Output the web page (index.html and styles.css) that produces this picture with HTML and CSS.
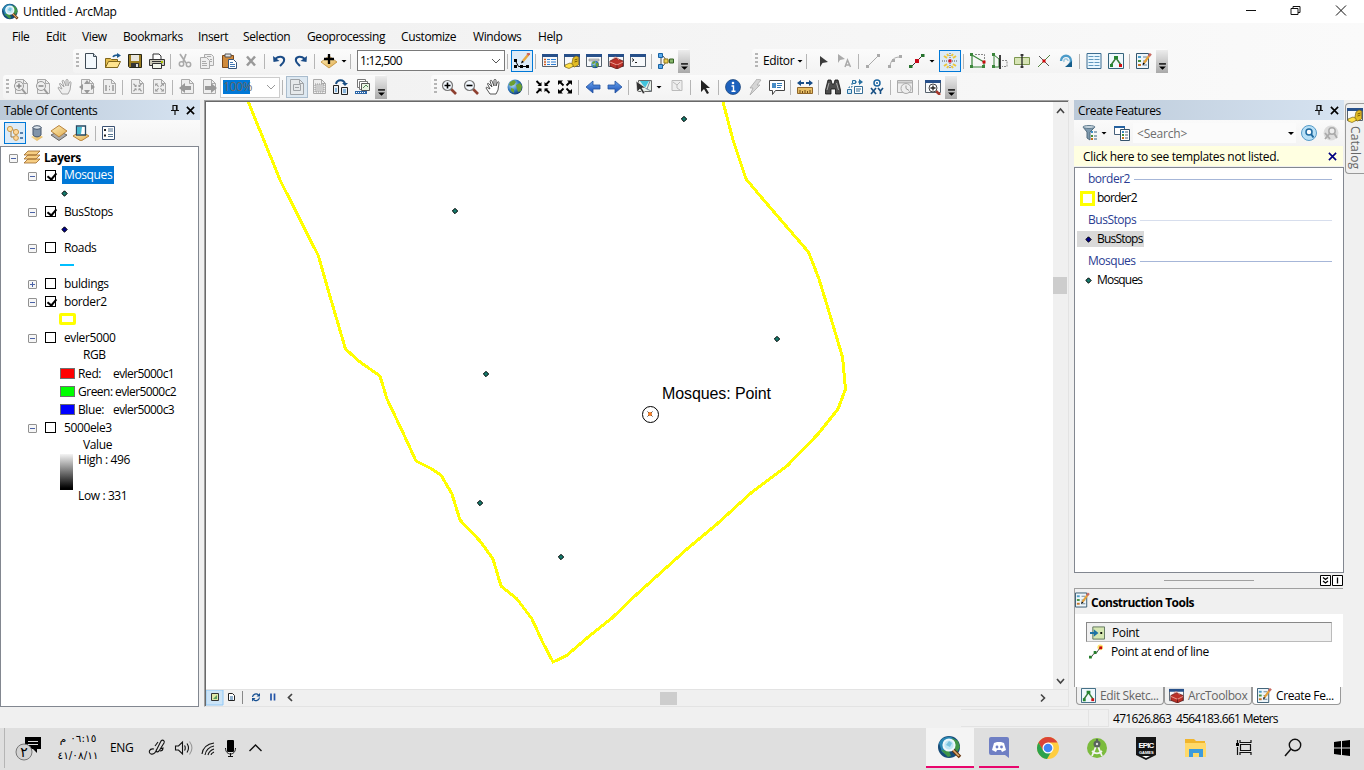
FILE: index.html
```html
<!DOCTYPE html>
<html lang="en">
<head>
<meta charset="utf-8">
<title>Untitled - ArcMap</title>
<link rel="stylesheet" href="styles.css">
</head>
<body>
<svg class="defs">
<defs>
<linearGradient id="gold" x1="0" y1="0" x2="1" y2="1"><stop offset="0" stop-color="#ffeeb8"/><stop offset="1" stop-color="#e0ad50"/></linearGradient>
<linearGradient id="blue" x1="0" y1="0" x2="0" y2="1"><stop offset="0" stop-color="#6aa5ee"/><stop offset="1" stop-color="#1a4eb4"/></linearGradient>
<radialGradient id="sea" cx=".35" cy=".35" r=".7"><stop offset="0" stop-color="#bfe0f7"/><stop offset=".6" stop-color="#2f78bd"/><stop offset="1" stop-color="#123a70"/></radialGradient>
<symbol id="globe" viewBox="0 0 16 16"><circle cx="8" cy="8" r="7.5" fill="url(#sea)"/><path d="M3 3l4-2 2 2-2 3-3 1-2-1zM9 6l4-2 2 3-1 5-3 1-1-3zM4 9l3 1v4l-3-2z" fill="#6c9f31"/></symbol>
<symbol id="app" viewBox="0 0 24 24"><circle cx="11" cy="12" r="11" fill="#154b78"/><path d="M1 8c3-5 7-7 12-6l5 3-2 4-7 11-5-3z" fill="#2987b4"/><path d="M14 3l6 3 2 6-3 5-3-4zM3 15l8 1 2 5-3 1z" fill="#3f9547"/><path d="M15 15l7 7" stroke="#67340c" stroke-width="3.6"/><path d="M15 15l6 6" stroke="#dfab70" stroke-width="1.6"/><circle cx="11" cy="10" r="5.6" fill="#bfe6f5" stroke="#edf7fb" stroke-width="2"/><path d="M8 10l3-4 3 2-2 4z" fill="#79c2df"/></symbol>
<symbol id="new" viewBox="0 0 16 16"><path d="M2.5.5h8l3 3v12h-11z" fill="#f3f8fc" stroke="#3e4a55"/><path d="M10.500.5v3h3" fill="#cfdbe5" stroke="#3e4a55"/></symbol>
<symbol id="open" viewBox="0 0 16 16"><path d="M.5 5.500h5l1 1h6v8h-12z" fill="#e5bd4c" stroke="#81671c"/><path d="M.5 14.500l3-6h12l-3 6z" fill="#ffe48e" stroke="#81671c"/><path d="M8 4c1-2 3-2 5-2" fill="none" stroke="#1c5a91" stroke-width="1.500"/><path d="M12 0l4 2.500-4 2.500z" fill="#1c5a91"/></symbol>
<symbol id="save" viewBox="0 0 16 16"><path d="M1.500 1.500h13v13h-12l-1-1z" fill="#9a7c20" stroke="#282719"/><path d="M4 2h8v6H4z" fill="#e8e6df"/><path d="M4 10h8v4H4z" fill="#333"/><path d="M9 11h2v3H9z" fill="#ddd"/></symbol>
<symbol id="print" viewBox="0 0 16 16"><path d="M4 7V1h6l2 2v4" fill="#fff" stroke="#333"/><path d="M.5 6.500h15v6H.5z" fill="#cdcab8" stroke="#333"/><path d="M3.500 10.500h9v5h-9z" fill="#f2f5e9" stroke="#333"/><path d="M3 8.500h10" stroke="#333"/><path d="M12 9h2" stroke="#aac600" stroke-width="2"/></symbol>
<symbol id="cut" viewBox="0 0 16 16"><path d="M3 1l6 9M9 1L6 9" stroke="#aaa" stroke-width="1.700"/><circle cx="4.500" cy="11" r="2.200" fill="none" stroke="#aaa" stroke-width="1.500"/><circle cx="11.500" cy="11.500" r="2.200" fill="none" stroke="#aaa" stroke-width="1.500"/></symbol>
<symbol id="copy" viewBox="0 0 16 16"><g fill="#eee" stroke="#aaa"><path d="M5.500 1.500h7l2 2v9h-9z"/><path d="M1.500 4.500h6l3 3v8h-9z"/></g><path d="M3 8.500h4M3 10.500h5M3 12.500h5M8 3.500h4M11 6.500h2M11 8.500h2" stroke="#aaa"/></symbol>
<symbol id="paste" viewBox="0 0 16 16"><path d="M1.500 2.500h11v12h-11z" fill="#d08b3d" stroke="#7b4717"/><path d="M4 1h6v3H4z" fill="#e5e5e5" stroke="#555"/><path d="M7.500 6.500h5l3 3v6h-8z" fill="#fff" stroke="#36547a"/><path d="M9 9.500h3M9 11.500h5M9 13.500h5" stroke="#4278b5"/></symbol>
<symbol id="del" viewBox="0 0 16 16"><path d="M4 3.500l8 9M12 3.500l-8 9" stroke="#999" stroke-width="2.500"/></symbol>
<symbol id="undo" viewBox="0 0 16 16"><path d="M4 6c5-4 10-2 9 2-.5 2-2 3-4 5" fill="none" stroke="#1b4c87" stroke-width="2"/><path d="M2 3l.5 6 6-1z" fill="#1b4c87"/></symbol>
<symbol id="redo" viewBox="0 0 16 16"><path d="M12 6C7 2 2 4 3 8c.5 2 2 3 4 5" fill="none" stroke="#1b4c87" stroke-width="2"/><path d="M14 3l-.5 6-6-1z" fill="#1b4c87"/></symbol>
<symbol id="add" viewBox="0 0 16 16"><path d="M0 9l8-6 8 6-8 6z" fill="url(#gold)" stroke="#b98225" stroke-width=".7"/><path d="M8 1v10M3 6h10" stroke="#000" stroke-width="2.300"/></symbol>
<symbol id="edit" viewBox="0 0 16 16"><path d="M1.500 8l3 5.500h10V12" fill="none" stroke="#000"/><path d="M0 6h3v3H0zM0 12h3v3H0zM6 12h3v3H6zM12 12h3v3h-3z"/><path d="M9 8l5-6" stroke="#e9a83d" stroke-width="2.500"/><path d="M13.500 2l2-2" stroke="#cb6355" stroke-width="3"/><path d="M7 10.500l1-3 2 1.500z"/></symbol>
<symbol id="win" viewBox="0 0 16 16"><path d="M.5 1.500h15v12H.5z" fill="#f7f9fb" stroke="#56616c"/><path d="M0 1h16v3H0z" fill="#27508a"/></symbol>
<symbol id="toc" viewBox="0 0 16 16"><use href="#win"/><path d="M2 6.500h2m-2 2.500h2m-2 2.500h2" stroke="#d25b21" stroke-width="1.300"/><path d="M5 6.500h3m1 0h5M5 9h3m1 0h5M5 11.500h3m1 0h5" stroke="#2d7dd3"/></symbol>
<symbol id="catalog" viewBox="0 0 16 16"><use href="#win"/><path d="M9 5l3-2 2.500 1v8l-4 2-3-2z" fill="#e3bd23" stroke="#7e6210" stroke-width=".7"/><path d="M1 12l5-2 3 1.500v2L5 15.500 1 14z" fill="#ffe145" stroke="#776014" stroke-width=".7"/><path d="M10.500 7l3-1M10.500 9l3-1" stroke="#795c00"/></symbol>
<symbol id="search" viewBox="0 0 16 16"><use href="#win"/><path d="M3 6h10v2H3z" fill="#ccc" stroke="#888" stroke-width=".6"/><use href="#globe" x="5" y="7.500" width="8" height="8"/></symbol>
<symbol id="toolbox" viewBox="0 0 16 16"><use href="#win"/><path d="M2 8l6-3 7 3v5l-6 3-7-3z" fill="#bb3128" stroke="#651b18" stroke-width=".8"/><path d="M5 6c1-3 5-2 6 1M2 9l7 3 6-3" stroke="#ec9c91" fill="none"/><path d="M9 12v4" stroke="#651b18"/></symbol>
<symbol id="python" viewBox="0 0 16 16"><use href="#win"/><path d="M2 5.500l2 1.500-2 1.500M5 9.500h2" fill="none" stroke="#222"/></symbol>
<symbol id="model" viewBox="0 0 16 16"><path d="M3 3v10M5 3l4 5-4 5M9 8h4" fill="none" stroke="#555"/><path d="M.5.500h4v4h-4zM.5 11.500h4v4h-4z" fill="#59a9ec" stroke="#1762a2"/><path d="M6 6h4v4H6z" fill="#e9cf55" stroke="#93781b"/><path d="M11.500 6h4v4h-4z" fill="#86b66b" stroke="#356025"/></symbol>
<symbol id="zin" viewBox="0 0 16 16"><path d="M10 10l5 5" stroke="#8e3f2f" stroke-width="2.700"/><circle cx="6.500" cy="6.500" r="5" fill="#f4f9ff" stroke="#777" stroke-width="1.200"/><path d="M3.500 6.500h6M6.500 3.500v6" stroke="#000" stroke-width="1.600"/></symbol>
<symbol id="zout" viewBox="0 0 16 16"><path d="M10 10l5 5" stroke="#8e3f2f" stroke-width="2.700"/><circle cx="6.500" cy="6.500" r="5" fill="#f4f9ff" stroke="#777" stroke-width="1.200"/><path d="M3.500 6.500h6" stroke="#000" stroke-width="1.600"/></symbol>
<symbol id="pan" viewBox="0 0 16 16"><path d="M5 15L1 9c0-1 1-1 2 0l2 1L2.500 5c0-1 1-1 1.500 0L7 8 5 2c.5-1 1.500-1 2 0l2 5V1c.5-1 1.500-1 2 0v6l1.500-4c1-1 1.500 0 1.500 1l-1 7-2 4z" fill="#fff" stroke="#444" stroke-width=".9"/></symbol>
<symbol id="pangrey" viewBox="0 0 16 16"><path d="M5 15L1 9c0-1 1-1 2 0l2 1L2.500 5c0-1 1-1 1.500 0L7 8 5 2c.5-1 1.500-1 2 0l2 5V1c.5-1 1.500-1 2 0v6l1.500-4c1-1 1.500 0 1.500 1l-1 7-2 4z" fill="#eee" stroke="#a5a5a5"/></symbol>
<symbol id="gpage" viewBox="0 0 16 16"><path d="M2.500.5h8l4 4v10h-12z" fill="#eee" stroke="#aaa"/><path d="M10.500.5v4h4" fill="none" stroke="#aaa"/></symbol>
<symbol id="gzin" viewBox="0 0 16 16"><use href="#gpage"/><path d="M9 10l4 5" stroke="#999" stroke-width="2"/><circle cx="6" cy="7" r="4.500" fill="#eee" stroke="#999"/><path d="M3.500 7h5M6 4.500v5" stroke="#888" stroke-width="1.500"/></symbol>
<symbol id="gzout" viewBox="0 0 16 16"><use href="#gpage"/><path d="M9 10l4 5" stroke="#999" stroke-width="2"/><circle cx="6" cy="7" r="4.500" fill="#eee" stroke="#999"/><path d="M3.500 7h5" stroke="#888" stroke-width="1.500"/></symbol>
<symbol id="gfull" viewBox="0 0 16 16"><use href="#gpage"/><path d="M8 1l3 4H5zM8 15l3-4H5zM0 8l4-3v6zM16 8l-4-3v6z" fill="#999"/></symbol>
<symbol id="g11" viewBox="0 0 16 16"><use href="#gpage"/><path d="M5 6v6M12 6v6M8 7.500h1M8 10.500h1" stroke="#999" stroke-width="1.500"/></symbol>
<symbol id="arrin" viewBox="0 0 16 16"><path d="M1.500 2l4 4M14.500 2l-4 4M1.500 14l4-4M14.500 14l-4-4" stroke="currentColor" stroke-width="1.800"/><path d="M6.500 3v4H2.500zM9.500 3v4h4zM6.500 13V9.500H2.500zM9.500 13V9.500h4z" fill="currentColor"/></symbol>
<symbol id="arrout" viewBox="0 0 16 16"><path d="M3 3l3.500 3.500M13 3L9.500 6.500M3 13l3.500-3.500M13 13L9.500 9.500" stroke="currentColor" stroke-width="1.800"/><path d="M1 1.500h5L1 6zM15 1.500h-5L15 6zM1 14.500h5L1 10zM15 14.500h-5l5-4.500z" fill="currentColor"/></symbol>
<symbol id="gin" viewBox="0 0 16 16"><use href="#gpage"/><use href="#arrin" x="3.500" y="3.500" width="10" height="10"/></symbol>
<symbol id="gout" viewBox="0 0 16 16"><use href="#gpage"/><use href="#arrout" x="3.500" y="3.500" width="10" height="10"/></symbol>
<symbol id="gback" viewBox="0 0 16 16"><use href="#gpage"/><path d="M0 9l6-5v3h6v4H6v3z" fill="#999"/></symbol>
<symbol id="gfwd" viewBox="0 0 16 16"><use href="#gpage"/><path d="M16 9l-6-5v3H4v4h6v3z" fill="#999"/></symbol>
<symbol id="gdraft" viewBox="0 0 16 16"><path d="M1.500.5h9l4 4v11h-13z" fill="#e6e9eb" stroke="#a0a4a8"/><path d="M10.500.5v4h4M4.500 5.500h7v6h-7zM6 8.500h4" fill="none" stroke="#a0a4a8"/></symbol>
<symbol id="gframe" viewBox="0 0 16 16"><use href="#gpage"/><path d="M4 5h9v8H4z" fill="#ccc" stroke="#999" stroke-dasharray="1 1"/></symbol>
<symbol id="layout" viewBox="0 0 16 16"><path d="M3 5c1-5 8-5 9 0" fill="none" stroke="#174d83" stroke-width="2"/><path d="M9 4h6l-3 3z" fill="#174d83"/><path d="M.5 6.500h5v8h-5zM8.500 8.500h6v7h-6z" fill="#e8eef4" stroke="#222"/><path d="M2 10h2M2 12h2M10 11h3M10 13h3" stroke="#267ac1"/></symbol>
<symbol id="ddp" viewBox="0 0 16 16"><path d="M2.500.5h8v8h-8z" fill="#fff" stroke="#777"/><path d="M4.500 2.500h8v8h-8z" fill="#fff" stroke="#777"/><path d="M6.500 4.500h8v7h-8z" fill="#e9f2e3" stroke="#555"/><path d="M8 9l3-3 2 2" stroke="#4f8554" fill="none"/><path d="M0 12h12v3H0z" fill="#2d67a8"/><path d="M1 13.500h10" stroke="#fff" stroke-dasharray="1 1"/></symbol>
<symbol id="back" viewBox="0 0 16 16"><path d="M1 8l7-6v4h7v4H8v4z" fill="url(#blue)" stroke="#24539e" stroke-width=".8"/></symbol>
<symbol id="fwd" viewBox="0 0 16 16"><path d="M15 8L8 2v4H1v4h7v4z" fill="url(#blue)" stroke="#24539e" stroke-width=".8"/></symbol>
<symbol id="selfeat" viewBox="0 0 16 16"><path d="M2.500 1.500h13v11h-13z" fill="#e9f1e8" stroke="#666"/><path d="M4 2h9l-4 7z" fill="#41c4dd"/><path d="M9 9l6 3M14 2l-3 8" stroke="#789"/><path d="M0 2l1 11 3-3 3 5 2-1-3-5h4z" fill="#333" stroke="#fff" stroke-width=".6"/></symbol>
<symbol id="clearsel" viewBox="0 0 16 16"><path d="M3 1.500h10v10H3z" fill="#eee" stroke="#bbb"/><path d="M4 3l4 3 3-3M8 6v3l3 2" fill="none" stroke="#bbb"/></symbol>
<symbol id="cursor" viewBox="0 0 16 16"><path d="M4 1v12l3-3 3 5 2-1-3-5h4z" fill="#222"/></symbol>
<symbol id="info" viewBox="0 0 16 16"><circle cx="8" cy="8" r="7.500" fill="#1d61bd" stroke="#174174" stroke-width=".7"/><circle cx="8" cy="4" r="1.300" fill="#fff"/><path d="M6.500 7H8.500v5M6.500 12.300h4" fill="none" stroke="#fff" stroke-width="1.400"/></symbol>
<symbol id="flash" viewBox="0 0 16 16"><path d="M10 0l4 1-4 5h3L3 16l3-7H3z" fill="#d5d5d5" stroke="#aaa" stroke-width=".8"/></symbol>
<symbol id="popup" viewBox="0 0 16 16"><path d="M.5 1.500h15v10h-9l-3 4v-4h-3z" fill="#fff" stroke="#444"/><path d="M3 4h4v5H3z" fill="#478cc7"/><path d="M8 4.500h5M8 6.500h5M8 8.500h4" stroke="#347bb8"/></symbol>
<symbol id="measure" viewBox="0 0 16 16"><path d="M0 4l4-3v2h3v2H4v2zM16 4l-4-3v2H9v2h3v2z" fill="#174d88"/><path d="M.5 8.500h15v6H.5z" fill="#e6bd65" stroke="#90662a"/><path d="M3 14v-3m2.500 3v-2m2.500 2v-3m2.500 3v-2m2.500 2v-3" stroke="#6e4815"/></symbol>
<symbol id="binoc" viewBox="0 0 16 16"><path d="M3 1h3l1 4h2l1-4h3l2.500 10v4h-5v-5H6v5H.5v-4z" fill="#4d4d4d" stroke="#111" stroke-width=".8"/><path d="M4 4l-2 7M11.500 4l2 7" stroke="#aaa"/></symbol>
<symbol id="route" viewBox="0 0 16 16"><path d="M2 12V8h3V3h7" fill="none" stroke="#286f9f" stroke-dasharray="2 1"/><path d="M12 0l4 3-4 3z" fill="#286f9f"/><path d="M.5 10.500h4v4h-4zM5.500 1.500h3v3h-3z" fill="#cfe6f5" stroke="#286f9f"/><path d="M7.500 7.500h8v7h-8z" fill="#fff" stroke="#346c95"/><path d="M9 10h5M9 12h4" stroke="#346c95"/></symbol>
<symbol id="xy" viewBox="0 0 16 16"><circle cx="8" cy="4" r="3" fill="#fff" stroke="#1c65a0" stroke-width="1.500"/><circle cx="8" cy="4" r="1" fill="#1c65a0"/><path d="M2 9l5 6M7 9l-5 6M9 9l2.500 3L14 9M11.500 12v3" fill="none" stroke="#164e83" stroke-width="1.600"/></symbol>
<symbol id="time" viewBox="0 0 16 16"><path d="M.5 1.500h15v12H.5z" fill="#eee" stroke="#aaa"/><path d="M1 3.500h14" stroke="#bbb" stroke-width="2"/><circle cx="9" cy="9.500" r="5" fill="#eee" stroke="#aaa"/><path d="M9 6.500v3l3 2" fill="none" stroke="#999"/></symbol>
<symbol id="viewer" viewBox="0 0 16 16"><use href="#win"/><path d="M11 12l4 4" stroke="#a6372a" stroke-width="2.500"/><circle cx="8" cy="9" r="4" fill="#fff" stroke="#444"/><path d="M5.500 9h5M8 6.500v5" stroke="#222" stroke-width="1.300"/></symbol>
<symbol id="ed1" viewBox="0 0 16 16"><path d="M5 3v11l2.500-4L13 9z" fill="#3c3c3c"/></symbol>
<symbol id="ed2" viewBox="0 0 16 16"><path d="M1 1v9l2-3 5-1z" fill="#aaa"/><path d="M8 14l2.500-7 3 7M9 12h4" fill="none" stroke="#aaa" stroke-width="1.500"/></symbol>
<symbol id="gline" viewBox="0 0 16 16"><path d="M3 13L13 3" stroke="#aaa"/><path d="M1 12h3v3H1zM12 1h3v3h-3z" fill="#aaa"/></symbol>
<symbol id="garc" viewBox="0 0 16 16"><path d="M3 13C4 7 7 4 13 4" fill="none" stroke="#aaa"/><path d="M1 12h3v3H1zM12 2h3v3h-3zM5 6h3v3H5z" fill="#aaa"/></symbol>
<symbol id="gseg" viewBox="0 0 16 16"><path d="M2 14L14 2" stroke="#333"/><path d="M0 12h3.500v3H0zM12 1h3.500v3H12z" fill="#27732e"/><path d="M6 6h4v4H6z" fill="#c70919"/></symbol>
<symbol id="point" viewBox="0 0 16 16"><path d="M8 0v16M0 8h16" stroke="#555" stroke-dasharray="1 1"/><path d="M2 3l3 2M11 11l3 2M2 13l3-2M11 5l3-2M5 1l1.500 2M9.500 13l1.500 2M5 15l1.500-2M9.500 3L11 1" stroke="#ecc63c" stroke-width="2"/><path d="M6.500 6.500h3v3h-3z" fill="#e31319"/></symbol>
<symbol id="vertices" viewBox="0 0 16 16"><path d="M2 2v12h12V9z" fill="none" stroke="#388438" stroke-width="1.200"/><path d="M5 1.500h9.500v6" fill="none" stroke="#888" stroke-dasharray="2 1"/><path d="M0 0h3v3H0zM0 12h3v3H0zM12 12h3v3h-3z" fill="#3b853b"/><path d="M12.500 7.500h3v3h-3z" fill="#c90b0b"/></symbol>
<symbol id="reshape" viewBox="0 0 16 16"><path d="M2 2v12h5V6z" fill="none" stroke="#388438"/><path d="M0 0h3v3H0zM0 12h3v3H0z" fill="#3b853b"/><path d="M8 2v14" stroke="#000" stroke-width="1.500"/><path d="M10 7.500h5v6h-5" fill="none" stroke="#888" stroke-dasharray="2 1"/></symbol>
<symbol id="splitpoly" viewBox="0 0 16 16"><path d="M.5 4.500h15v7H.5z" fill="#d7e4b5" stroke="#7d9750"/><path d="M8 1v14M6.500 2h3M6.500 14h3" stroke="#222" stroke-width="1.300"/></symbol>
<symbol id="splitline" viewBox="0 0 16 16"><path d="M2 14L14 2" stroke="#51833e"/><path d="M3 3l10 10" stroke="#555"/><path d="M6.500 6.500h3v3h-3z" fill="#ce0909"/></symbol>
<symbol id="rotate" viewBox="0 0 16 16"><path d="M3 8c0-7 10-7 10 0 0 2-1 3-2 4" fill="none" stroke="#4c9bc9" stroke-width="2.400"/><path d="M7 14h7V8z" fill="#155d8a"/><path d="M6 9c-1-4 4-4 4-1" fill="none" stroke="#9ecae0" stroke-width="1.500"/></symbol>
<symbol id="attrs" viewBox="0 0 16 16"><path d="M1 .5h14v15H1z" fill="#e9f7ff" stroke="#3c6d91"/><path d="M2.500 3.500h5m1 0h5m-11 3h5m1 0h5m-11 3h5m1 0h5m-11 3h5m1 0h5" stroke="#6098be"/></symbol>
<symbol id="sketch" viewBox="0 0 16 16"><path d="M.5.500h15v15H.5z" fill="#eff8fc" stroke="#35647d"/><path d="M3 12l5-7 5 7" fill="none" stroke="#357b36" stroke-width="1.500"/><path d="M6 3h4v3H6zM2 11h3v3H2z" fill="#248430"/><path d="M11 11h3v3h-3z" fill="#d10f12"/></symbol>
<symbol id="create" viewBox="0 0 16 16"><path d="M.5.500h12v15H.5z" fill="#edf5fa" stroke="#33566e"/><path d="M2 3h3v2H2z" fill="#4b9dc6"/><path d="M2 7h3v2H2z" fill="#46903c"/><path d="M2 11h3v2H2z" fill="#c87529"/><path d="M7 4h4M7 8h4M7 12h4" stroke="#6c8395"/><path d="M8 10l5-7" stroke="#e5a139" stroke-width="2.200"/><path d="M12.800 3.200l2-2.500" stroke="#c96960" stroke-width="2.600"/><path d="M6.500 12.500l.5-3 2 1z"/></symbol>
<symbol id="ldraw" viewBox="0 0 16 16"><path d="M4 4v8h5M5 4l4 3" fill="none" stroke="#9a7640"/><circle cx="3" cy="4" r="2.600" fill="#ffe1a3" stroke="#c8984e"/><circle cx="9" cy="7" r="2.600" fill="#ffd79a" stroke="#c8984e"/><circle cx="9" cy="13" r="2.400" fill="#ffd79a" stroke="#c8984e"/><path d="M13 8h3M13 13h3" stroke="#2b5e93" stroke-width="1.300"/></symbol>
<symbol id="lsource" viewBox="0 0 16 16"><path d="M2 12l6-4 6 4-6 4z" fill="url(#gold)"/><path d="M4 2v8c2 2.500 6 2.500 8 0V2" fill="#8295aa" stroke="#46566c"/><ellipse cx="8" cy="2.500" rx="4" ry="1.800" fill="#dce5ed" stroke="#46566c"/></symbol>
<symbol id="lvis" viewBox="0 0 16 16"><path d="M0 10l8 5.500 8-5.500-8-4z" fill="#aaa" stroke="#666"/><path d="M0 6l8-5.500L16 6l-8 6z" fill="url(#gold)" stroke="#b9833b"/></symbol>
<symbol id="lsel" viewBox="0 0 16 16"><path d="M0 11l8-5 8 5-8 5z" fill="url(#gold)" stroke="#b9833b"/><path d="M3.500 1h9v9h-9z" fill="#fff" stroke="#244a64" stroke-width="1.300"/><path d="M4 2h5l-1 7H4z" fill="#48b9cf"/></symbol>
<symbol id="lopt" viewBox="0 0 16 16"><path d="M2.500 1.500h12v13h-12z" fill="#fff" stroke="#3b5273"/><path d="M4 5h2m-2 5.500h2" stroke="#222" stroke-width="2"/><path d="M8 4h5M8 6h5M8 9.500h5M8 11.500h5" stroke="#557591"/></symbol>
<symbol id="layers" viewBox="0 0 16 14"><path d="M0 13l4-4h12l-4 4zM0 9l4-4h12l-4 4zM0 5l4-4h12l-4 4z" fill="#f7ce83" stroke="#9c6729" stroke-width=".8"/></symbol>
<symbol id="pin" viewBox="0 0 8 10"><path d="M2 .500h4v5H2zM0 5.500h8M4 6v4M5.500 1v4" fill="none" stroke="#111" stroke-width="1.200"/></symbol>
<symbol id="x" viewBox="0 0 10 10"><path d="M1 1l8 8M9 1L1 9" fill="none" stroke="currentColor" stroke-width="1.800"/></symbol>
<symbol id="filter" viewBox="0 0 16 16"><path d="M1 2h12l-5 5v8l-3-2V7z" fill="#7d99ae" stroke="#526b7d"/><ellipse cx="7" cy="2" rx="6" ry="1.500" fill="#c8d6df" stroke="#627d90"/><path d="M9 6h2v2H9z" fill="#398ec5"/><path d="M9 10h2v2H9z" fill="#488f36"/><path d="M9 13h2v2H9z" fill="#c46b18"/><path d="M12 7h3M12 11h3M12 14h3" stroke="#36617c"/></symbol>
<symbol id="templ" viewBox="0 0 16 16"><path d="M.5 1.500h10v8H.5z" fill="#fff" stroke="#46607b"/><path d="M0 1h11v2H0z" fill="#2461a0"/><path d="M6.500 4.500h9v11h-9z" fill="#fff" stroke="#34536c"/><path d="M8 7h2" stroke="#3788c1" stroke-width="2"/><path d="M8 10h2" stroke="#3d8d38" stroke-width="2"/><path d="M8 13h2" stroke="#c66f18" stroke-width="2"/><path d="M11 7h3M11 10h3M11 13h3" stroke="#46607b"/></symbol>
<symbol id="find" viewBox="0 0 16 16"><circle cx="8" cy="8" r="7.500" fill="#b9e0f6" stroke="#559bc9"/><circle cx="8" cy="7" r="3" fill="#fff" stroke="#1e699f" stroke-width="1.500"/><path d="M10 9l2.500 3.500" stroke="#1e699f" stroke-width="2"/></symbol>
<symbol id="unfind" viewBox="0 0 16 16"><circle cx="8" cy="8" r="7.500" fill="#ddd"/><circle cx="9" cy="6" r="3.200" fill="#eee" stroke="#aaa" stroke-width="1.500"/><path d="M11 8l3 5M2 8l5 6M7 8l-5 6" stroke="#aaa" stroke-width="1.800"/></symbol>
<symbol id="over" viewBox="0 0 6 7"><path d="M0 .8h6" stroke="#000" stroke-width="1.200"/><path d="M0 3h6L3 6z"/></symbol>
</defs></svg>

<header class="title"><svg class="ico"><use href="#app"/></svg><span class="cap">Untitled - ArcMap</span>
<svg class="winbtns" viewBox="0 0 120 23"><path d="M6 10.500h10M51 8.500h7v6h-7zM53 8V6.500h7v6h-2M96 5.500l10 10M106 5.500l-10 10" fill="none" stroke="#111"/></svg></header>
<nav class="menu"><span class="m1">File</span><span class="m2">Edit</span><span class="m3">View</span><span class="m4">Bookmarks</span><span class="m5">Insert</span><span class="m6">Selection</span><span class="m7">Geoprocessing</span><span class="m8">Customize</span><span class="m9">Windows</span><span>Help</span></nav>

<div class="row">
<div class="bar std"><i class="grip"></i><i class="b"><svg><use href="#new"/></svg></i><i class="b"><svg><use href="#open"/></svg></i><i class="b"><svg><use href="#save"/></svg></i><i class="b"><svg><use href="#print"/></svg></i><i class="sep"></i><i class="b"><svg><use href="#cut"/></svg></i><i class="b"><svg><use href="#copy"/></svg></i><i class="b"><svg><use href="#paste"/></svg></i><i class="b"><svg><use href="#del"/></svg></i><i class="sep"></i><i class="b"><svg><use href="#undo"/></svg></i><i class="b"><svg><use href="#redo"/></svg></i><i class="sep"></i><i class="b"><svg><use href="#add"/></svg></i><i class="caret"></i><i class="sep"></i><div class="combo scale"><span>1:12,500</span><svg viewBox="0 0 10 6"><path d="M1 1l4 4 4-4" fill="none" stroke="#555"/></svg></div><i class="sep"></i><i class="b on"><svg><use href="#edit"/></svg></i><i class="sep"></i><i class="b"><svg><use href="#toc"/></svg></i><i class="b"><svg><use href="#catalog"/></svg></i><i class="b"><svg><use href="#search"/></svg></i><i class="b"><svg><use href="#toolbox"/></svg></i><i class="b"><svg><use href="#python"/></svg></i><i class="sep"></i><i class="b"><svg><use href="#model"/></svg></i><i class="over"><svg><use href="#over"/></svg></i></div>
<div class="bar editor"><i class="grip"></i><span class="edtext">Editor</span><i class="caret"></i><i class="sep sepgap"></i><i class="b"><svg><use href="#ed1"/></svg></i><i class="b"><svg><use href="#ed2"/></svg></i><i class="sep"></i><i class="b"><svg><use href="#gline"/></svg></i><i class="b"><svg><use href="#garc"/></svg></i><i class="b"><svg><use href="#gseg"/></svg></i><i class="caret"></i><i class="b on gap3"><svg><use href="#point"/></svg></i><i class="sep"></i><i class="b"><svg><use href="#vertices"/></svg></i><i class="b"><svg><use href="#reshape"/></svg></i><i class="b"><svg><use href="#splitpoly"/></svg></i><i class="b"><svg><use href="#splitline"/></svg></i><i class="b"><svg><use href="#rotate"/></svg></i><i class="sep"></i><i class="b"><svg><use href="#attrs"/></svg></i><i class="b"><svg><use href="#sketch"/></svg></i><i class="sep"></i><i class="b"><svg><use href="#create"/></svg></i><i class="over"><svg><use href="#over"/></svg></i></div>
</div>
<div class="row second">
<div class="bar lay"><i class="grip"></i><i class="b"><svg><use href="#gzin"/></svg></i><i class="b"><svg><use href="#gzout"/></svg></i><i class="b"><svg><use href="#pangrey"/></svg></i><i class="b"><svg><use href="#gfull"/></svg></i><i class="b"><svg><use href="#g11"/></svg></i><i class="sep"></i><i class="b dim"><svg><use href="#gin"/></svg></i><i class="b dim"><svg><use href="#gout"/></svg></i><i class="sep"></i><i class="b"><svg><use href="#gback"/></svg></i><i class="b"><svg><use href="#gfwd"/></svg></i><div class="combo pct"><span>100%</span><svg viewBox="0 0 10 6"><path d="M1 1l4 4 4-4" fill="none" stroke="#999"/></svg></div><i class="sep"></i><i class="b onoff"><svg><use href="#gdraft"/></svg></i><i class="b"><svg><use href="#gframe"/></svg></i><i class="b"><svg><use href="#layout"/></svg></i><i class="b"><svg><use href="#ddp"/></svg></i><i class="over"><svg><use href="#over"/></svg></i></div>
<div class="bar tools"><i class="grip"></i><i class="b"><svg><use href="#zin"/></svg></i><i class="b"><svg><use href="#zout"/></svg></i><i class="b"><svg><use href="#pan"/></svg></i><i class="b"><svg><use href="#globe"/></svg></i><i class="sep"></i><i class="b"><svg><use href="#arrin"/></svg></i><i class="b"><svg><use href="#arrout"/></svg></i><i class="sep"></i><i class="b"><svg><use href="#back"/></svg></i><i class="b"><svg><use href="#fwd"/></svg></i><i class="sep"></i><i class="b gap1"><svg><use href="#selfeat"/></svg></i><i class="caret"></i><i class="b gap3"><svg><use href="#clearsel"/></svg></i><i class="sep"></i><i class="b"><svg><use href="#cursor"/></svg></i><i class="sep"></i><i class="b"><svg><use href="#info"/></svg></i><i class="b"><svg><use href="#flash"/></svg></i><i class="b"><svg><use href="#popup"/></svg></i><i class="sep"></i><i class="b"><svg><use href="#measure"/></svg></i><i class="sep"></i><i class="b"><svg><use href="#binoc"/></svg></i><i class="b"><svg><use href="#route"/></svg></i><i class="b"><svg><use href="#xy"/></svg></i><i class="sep"></i><i class="b"><svg><use href="#time"/></svg></i><i class="sep"></i><i class="b"><svg><use href="#viewer"/></svg></i><i class="over"><svg><use href="#over"/></svg></i></div>
</div>

<main>
<aside class="left">
<div class="phead"><span class="toctitle">Table Of Contents</span><svg class="pin"><use href="#pin"/></svg><svg class="px"><use href="#x"/></svg></div>
<div class="ptools"><i class="b on"><svg><use href="#ldraw"/></svg></i><i class="b"><svg><use href="#lsource"/></svg></i><i class="b"><svg><use href="#lvis"/></svg></i><i class="b"><svg><use href="#lsel"/></svg></i><i class="sep"></i><i class="b"><svg><use href="#lopt"/></svg></i></div>
<div class="tree">
<div class="t root"><i class="exp"></i><svg class="lyr"><use href="#layers"/></svg><b>Layers</b></div>
<div class="t"><i class="exp"></i><i class="cb ck"></i><span class="nm sel">Mosques</span></div>
<div class="t sym"><svg class="dot teal" viewBox="0 0 7 7"><path d="M3.500.8l2.700 2.700-2.700 2.700L.8 3.500z"/></svg></div>
<div class="t"><i class="exp"></i><i class="cb ck"></i><span class="nm">BusStops</span></div>
<div class="t sym"><svg class="dot navy" viewBox="0 0 7 7"><path d="M3.500.8l2.700 2.700-2.700 2.700L.8 3.500z"/></svg></div>
<div class="t"><i class="exp"></i><i class="cb"></i><span class="nm">Roads</span></div>
<div class="t sym"><i class="road"></i></div>
<div class="t"><i class="exp plus"></i><i class="cb"></i><span class="nm">buldings</span></div>
<div class="t"><i class="exp"></i><i class="cb ck"></i><span class="nm">border2</span></div>
<div class="t sym"><i class="poly"></i></div>
<div class="t"><i class="exp"></i><i class="cb"></i><span class="nm">evler5000</span></div>
<div class="t val">RGB</div>
<div class="t sym"><i class="sw red"></i><span class="ch">Red:</span><span class="band">evler5000c1</span></div>
<div class="t sym"><i class="sw green"></i><span class="ch g">Green:</span><span class="band">evler5000c2</span></div>
<div class="t sym"><i class="sw blu"></i><span class="ch">Blue:</span><span class="band">evler5000c3</span></div>
<div class="t"><i class="exp"></i><i class="cb"></i><span class="nm">5000ele3</span></div>
<div class="t val">Value</div>
<div class="ramp"><i></i><div><span>High : 496</span><span>Low : 331</span></div></div>
</div>
</aside>

<section class="map">
<div class="maprow">
<svg class="canvas" viewBox="206 102 847 587"><path d="M247.500 100L280.500 181 318.500 256 330.500 298 340.500 332 345.500 349 360 362 380 376 387 399 405 437 416 461 430 468 441 475 452 494 460 520 480 541 493 559 501 586 517 599 532 619 543 643 553 662 566 656 587 638 612 618 637 594 687 549 717 524 751 493 787 466 818 434 838 409 845.500 389 842.500 357 830 315 819 279 808.500 252 780 219 762 198 746 179 733 140 722.500 100" fill="none" stroke="#ff0" stroke-width="3" shape-rendering="crispEdges"/>
<g fill="#147a6c" stroke="#000"><path d="M684 116.300l2.700 2.700-2.700 2.700-2.700-2.700zM455 208.300l2.700 2.700-2.700 2.700-2.700-2.700zM486 371.300l2.700 2.700-2.700 2.700-2.700-2.700zM777 336.300l2.700 2.700-2.700 2.700-2.700-2.700zM480 500.300l2.700 2.700-2.700 2.700-2.700-2.700zM561 554.300l2.700 2.700-2.700 2.700-2.700-2.700z"/></g>
<circle cx="650.500" cy="414.500" r="8" fill="none" stroke="#000"/><path d="M647.500 411.500l5 5M652.500 411.500l-5 5" stroke="#444"/><circle cx="650" cy="414" r="2" fill="#f47a20"/>
<text class="tip" x="662" y="399" textLength="109">Mosques: Point</text></svg>
<div class="vs"><svg viewBox="0 0 15 14"><path d="M4 11l3.500-4 3.500 4" fill="none" stroke="#444" stroke-width="1.600"/></svg><i></i><svg viewBox="0 0 15 14"><path d="M4 4l3.500 4L11 4" fill="none" stroke="#444" stroke-width="1.600"/></svg></div>
</div>
<div class="hs"><svg class="views" viewBox="0 0 100 16"><path d="M0 0h17v15H0z" fill="#cce4f7" stroke="#90c8f6"/><path d="M5.500 3.500h7v7h-7z" fill="#dfe6a7" stroke="#333"/><path d="M7 9l4-4v4z" fill="#5d9e5d"/><path d="M22.500 3.500h4l2 2v5h-6z" fill="#fff" stroke="#222"/><path d="M24 7h3M24 9h3" stroke="#27679e"/><path d="M36.500 1v13" stroke="#888"/><path d="M46.500 7a3.500 3.500 0 0 1 6-2M53.500 7.500a3.500 3.500 0 0 1-6 2" fill="none" stroke="#164f91" stroke-width="1.200"/><path d="M54 3v3.500h-3.500zM46 11.500V8h3.500z" fill="#164f91"/><path d="M65 3.500v7M68.500 3.500v7" stroke="#2455a7" stroke-width="1.700"/><path d="M86 4l-3.500 3.500L86 11" fill="none" stroke="#444" stroke-width="1.700"/></svg><i></i><svg class="ra" viewBox="0 0 8 10"><path d="M2 1.500L5.500 5 2 8.500" fill="none" stroke="#444" stroke-width="1.600"/></svg></div>
</section>

<aside class="right">
<div class="phead"><span class="cftitle">Create Features</span><svg class="pin"><use href="#pin"/></svg><svg class="px"><use href="#x"/></svg></div>
<div class="ptools srch"><i class="b"><svg><use href="#filter"/></svg></i><i class="caret"></i><i class="b"><svg><use href="#templ"/></svg></i><div class="sbox"><span>&lt;Search&gt;</span><i class="caret"></i></div><i class="b"><svg><use href="#find"/></svg></i><i class="b"><svg><use href="#unfind"/></svg></i></div>
<div class="note"><span>Click here to see templates not listed.</span><svg><use href="#x"/></svg></div>
<div class="list">
<h4>border2<i class="dark"></i></h4><p><i class="sq"></i><span>border2</span></p>
<h4>BusStops<i></i></h4><p class="cur"><svg class="dot navy" viewBox="0 0 7 7"><path d="M3.500.8l2.700 2.700-2.700 2.700L.8 3.500z"/></svg><span>BusStops</span></p>
<h4>Mosques<i class="dark"></i></h4><p><svg class="dot teal" viewBox="0 0 7 7"><path d="M3.500.8l2.700 2.700-2.700 2.700L.8 3.500z"/></svg><span>Mosques</span></p>
</div>
<div class="split"><i></i><svg viewBox="0 0 23 11"><path d="M.5.5h10v10H.5zM12.500.5h10v10h-10z" fill="#fff" stroke="#000"/><path d="M3 2.500l2.500 2L8 2.500M3 6l2.500 2L8 6M17.500 2.500v6" fill="none" stroke="#000" stroke-width="1.300"/></svg></div>
<div class="cons"><div class="chead"><svg><use href="#create"/></svg><b>Construction Tools</b></div>
<div class="tool picked"><svg viewBox="0 0 16 16"><path d="M3 1.500h12.500v13H3z" fill="#d6e7b2" stroke="#5c735b"/><path d="M0 7h4V4l5 4-5 4V9H0z" fill="#1e73a5"/><path d="M11 7h2v2h-2z"/></svg><span>Point</span></div>
<div class="tool second-tool"><svg viewBox="0 0 16 16"><circle cx="12" cy="3" r="3" fill="#ffe36d"/><path d="M2 14l3-4 3-1 4-6" fill="none" stroke="#444"/><path d="M0 12h3v3H0zM5 7h3v3H5z" fill="#257d2c"/><path d="M11 2h3v3h-3z" fill="#c90b0b"/></svg><span class="pel">Point at end of line</span></div></div>
<div class="tabs"><div class="tb1"><svg><use href="#sketch"/></svg>Edit Sketc...</div><div class="tb2"><svg><use href="#toolbox"/></svg>ArcToolbox</div><div class="tb3"><svg><use href="#create"/></svg>Create Fe...</div></div>
</aside>
<aside class="cat"><svg><use href="#catalog"/></svg><span>Catalog</span></aside>
</main>
<footer class="status"><i></i><i class="n"></i><span>471626.863&nbsp; 4564183.661 Meters</span></footer>
<footer class="task">
<div class="tray"><svg class="notif" viewBox="0 0 28 30"><path d="M10 3h16v12h-4v4l-4-4h-8z"/><path d="M13 7.500h10M13 10.500h10" stroke="#ddd"/><circle cx="9" cy="18" r="8" fill="#d2d2d2" stroke="#777"/><text x="9" y="23" text-anchor="middle" class="num">٢</text></svg>
<div class="clock"><div class="time"><span>م</span><span>٠٦:١٥</span></div><span>٤١/٠٨/١١</span></div><span class="eng">ENG</span>
<svg class="ti" viewBox="0 0 116 20"><g fill="none" stroke="#111" stroke-width="1.100"><path d="M7 11c-5-1-6 4-3 5 4 1 5-3 7-7l3-6c2-2 4 0 3 2l-5 8c-2 2-4 0-2-2M8 8l3-4M13 13c2 0 3-1 3-3l-3 1"/><path d="M28.500 8h3l4-4v12l-4-4h-3zM37.500 7.500c1 1 1 4 0 5M40 5.500c2 3 2 6 0 9"/><path d="M42.500 3.500c3 4 3 9 0 13" stroke="#999"/><path d="M55 16c1-7 5-10 12-11M58 17c1-6 4-8 9-9M61 17c1-4 3-5 6-6M64 17c0-1 1-2 3-3"/></g><rect x="80" y="2" width="7" height="12" rx="1"/><path d="M78.500 10c0 8 10 8 10 0M83.500 15v3M81 18.500h5" fill="none" stroke="#111"/><path d="M102.500 13l6-6 6 6" fill="none" stroke="#111" stroke-width="1.400"/></svg></div>
<div class="apps">
<div class="a act"><svg viewBox="0 0 24 24"><use href="#app"/></svg></div>
<div class="a run"><svg viewBox="0 0 24 24"><path d="M4 2h16a2 2 0 0 1 2 2v19l-4-3H4a2 2 0 0 1-2-2V4a2 2 0 0 1 2-2z" fill="#6f7fc4"/><path d="M7 8l3-1h4l3 1 2 7-4 2-1-2h-4l-1 2-4-2z" fill="#fff"/><circle cx="10" cy="12" r="1.400" fill="#6f7fc4"/><circle cx="14.500" cy="12" r="1.400" fill="#6f7fc4"/></svg></div>
<div class="a"><svg viewBox="0 0 24 24"><circle cx="12" cy="12" r="11" fill="#ffcd40"/><path d="M2.500 6.500A11 11 0 0 1 21.500 6.500H12L7 15z" fill="#db4437"/><path d="M2.500 6.500A11 11 0 0 0 11 23l5-8.500-9 0z" fill="#2ba24c"/><circle cx="12" cy="12" r="5.500" fill="#fff"/><circle cx="12" cy="12" r="4.300" fill="#4285f4"/></svg></div>
<div class="a"><svg viewBox="0 0 24 24"><circle cx="12" cy="12" r="10" fill="#7bbb3d"/><path d="M12 8l-5 12M12 8l5 12M7 15c3 3 7 3 10 0" fill="none" stroke="#f4f4f4" stroke-width="1.800"/><circle cx="12" cy="8" r="3.500" fill="#59635d"/><path d="M12 3v5" stroke="#59635d" stroke-width="2"/><circle cx="12" cy="8" r="1.200" fill="#ddd"/></svg></div>
<div class="a"><svg viewBox="0 0 24 24"><path d="M2 1h20v18l-10 5-10-5z" fill="#151515"/><text x="4.500" y="12" class="epic">EPIC</text><text x="5" y="17.500" class="games">GAMES</text><path d="M8 20h8l-4 2z" fill="#fff"/></svg></div>
<div class="a"><svg viewBox="0 0 24 24"><path d="M2 3h9l2 2h9v16H2z" fill="#f1b52c"/><path d="M2 7h21v14H2z" fill="#ffd969"/><path d="M6 13h14v8h-4v-4h-6v4H6z" fill="#3c9bdd"/></svg></div>
<div class="a"><svg viewBox="0 0 24 24"><path d="M8.500 8.500h10v6h-10zM8 4v2.500h11V4M8 19v-2.500h11V19M5.500 4v3M5.500 11v8" fill="none" stroke="#111" stroke-width="1.200"/><path d="M4 7h3v3H4z"/></svg></div>
<div class="a"><svg viewBox="0 0 24 24"><circle cx="14" cy="9" r="5.700" fill="none" stroke="#111" stroke-width="1.400"/><path d="M10 13l-6 7" stroke="#111" stroke-width="1.500"/></svg></div>
<div class="a"><svg viewBox="0 0 24 24"><path d="M4 6l7-1v6.500H4zM12 5l8-1v7.500h-8zM4 12.500h7V19l-7-1zM12 12.500h8V20l-8-1z"/></svg></div>
</div></footer>
</body>
</html>
```
FILE: styles.css
```css
* { box-sizing: border-box; }
body { margin: 0; width: 1364px; height: 770px; overflow: hidden; display: flex; flex-direction: column; background: #f0f0f0; font: 12px/18px "Open Sans", "Noto Sans", sans-serif; letter-spacing: -0.38px; color: #000; white-space: nowrap; }
.defs { position: absolute; width: 0; height: 0; }
i { font-style: normal; display: block; flex: none; }
svg { display: block; flex: none; }
.title { height: 23px; flex: none; background: #fff; display: flex; align-items: center; padding-left: 2px; }
.title .ico { width: 17px; height: 17px; }
.cap { margin-left: 4px; flex: 1; letter-spacing: -.25px; }
.winbtns { width: 120px; height: 23px; margin-right: 4px; }
.menu { height: 26px; flex: none; display: flex; align-items: center; padding: 1px 0 0 12px; background: linear-gradient(90deg, #efefef, #fafafa); }
.m1 { width: 34px; } .m2 { width: 36px; } .m3 { width: 41px; } .m4 { width: 75px; } .m5 { width: 45px; } .m6 { width: 64px; } .m7 { width: 94px; } .m8 { width: 72px; } .m9 { width: 65px; }
.row { height: 25px; flex: none; display: flex; background: linear-gradient(90deg, #efefef, #fafafa); }
.second { height: 26px; padding-top: 1px; }
.bar { height: 24px; display: flex; align-items: center; background: linear-gradient(#fbfbfb, #f3f3f3); border-radius: 3px; }
.std { margin-left: 73px; } .editor { margin-left: 62px; } .lay { margin-left: 3px; } .tools { margin-left: 44px; }
.grip { width: 3px; height: 16px; margin: 0 1px 0 3px; background: repeating-linear-gradient(#b5b5b5 0 2px, transparent 2px 4px); }
.b { width: 22px; height: 22px; display: flex; align-items: center; justify-content: center; }
.b svg { width: 16px; height: 16px; }
.on { border: 1px solid #0078d7; background: #dcebf8; }
.onoff { border: 1px solid #a9bccd; background: #dde8f1; }
.dim { color: #999; }
.gap3 { margin-left: 3px; } .gap1 { margin-left: 1px; }
.sep { width: 6px; height: 15px; background: linear-gradient(90deg, transparent 2px, #b5b5b5 2px 3px, transparent 3px); }
.sepgap { margin-right: 2px; }
.caret { width: 8px; height: 3px; background: #000; clip-path: polygon(1px 0, 7px 0, 4px 3px); }
.over { width: 12px; height: 23px; margin-left: 1px; background: linear-gradient(#ececec, #a9a9a9); display: flex; align-items: flex-end; justify-content: center; padding-bottom: 2px; }
.over svg { width: 7px; height: 8px; }
.combo { display: flex; align-items: center; justify-content: space-between; background: #fff; border: 1px solid #7a7a7a; }
.combo svg { width: 10px; height: 6px; margin-right: 3px; }
.scale { width: 148px; height: 21px; margin: -1px 0 0 3px; padding-left: 2px; letter-spacing: -.7px; }
.pct { width: 60px; height: 21px; border-color: #ccc; padding-left: 2px; }
.pct span { background: #0078d7; color: #666; line-height: 14px; width: 27px; }
.edtext { width: 33px; margin-left: 4px; }

main { height: 608px; flex: none; display: flex; }
.left { width: 200px; height: 607px; flex: none; display: flex; flex-direction: column; }
.phead { height: 20px; flex: none; display: flex; align-items: center; padding: 1px 5px 0 4px; background: linear-gradient(90deg, #bccad9, #d6e3f1); }
.phead span { flex: 1; padding-top: 1px; }
.toctitle { letter-spacing: -.42px; }
.pin { width: 8px; height: 10px; margin: -2px 7px 0 0; }
.px { width: 9px; height: 9px; margin-top: -1px; }
.ptools { height: 26px; flex: none; display: flex; align-items: center; padding-left: 4px; background: linear-gradient(#fafafa, #f3f3f3); }
.left .ptools .sep { margin: 0 -2px 0 1px; }
.tree { flex: 1; width: 199px; background: #fff; border: 1px solid #828790; padding-top: 1px; }
.t { height: 18px; display: flex; align-items: center; padding-left: 27px; }
.t span, .root b { position: relative; top: .5px; }
.root { padding-left: 8px; }
.root b { margin-left: 4px; letter-spacing: -.45px; }
.lyr { width: 16px; height: 14px; margin-left: 6px; }
.exp { width: 9px; height: 9px; border: 1px solid #919191; border-radius: 1px; margin-top: 2px; background: linear-gradient(#4b63a7, #4b63a7) center / 5px 1px no-repeat, #f6f6f6; }
.plus { background: linear-gradient(#4b63a7, #4b63a7) center / 5px 1px no-repeat, linear-gradient(#4b63a7, #4b63a7) center / 1px 5px no-repeat, #f6f6f6; }
.cb { width: 11px; height: 11px; border: 1px solid #000; margin: 1px 0 0 8px; background: #fff; }
.ck::after { content: ""; display: block; width: 4px; height: 7px; margin: 0 0 0 3px; border: solid #000; border-width: 0 2px 2px 0; transform: rotate(40deg); }
.nm { margin-left: 6px; padding: 0 2px; }
.t .sel { background: #0078d7; color: #fff; width: 52px; top: 0; }
.sym { padding-left: 59px; }
.dot { width: 7px; height: 7px; margin-left: 1px; stroke: #000; }
.teal { fill: #147a6c; } .navy { fill: #00008b; }
.road { width: 14px; height: 2px; background: #00bfff; }
.poly { width: 17px; height: 12px; border: 3px solid #ff0; border-radius: 2px; margin-left: -1px; }
.val { padding-left: 82px; }
.sw { width: 15px; height: 11px; border: 1px solid #6e6e6e; }
.red { background: #f00; } .green { background: #0f0; } .blu { background: #00f; }
.ch { width: 35px; margin-left: 3px; } .g { width: 37px; letter-spacing: -.5px; }
.band { letter-spacing: -.58px; }
.ramp { display: flex; padding-left: 59px; }
.ramp i { width: 13px; height: 36px; background: linear-gradient(#f4f4f4, #000 95%); }
.ramp div { display: flex; flex-direction: column; justify-content: space-between; margin: -3px 0 0 5px; height: 54px; }

.map { width: 865px; height: 607px; margin-left: 4px; flex: none; display: flex; flex-direction: column; border: 1px solid #a0a0a0; border-right-color: #e3e3e3; border-bottom-color: #e3e3e3; box-shadow: inset 1px 1px #696969; padding: 1px 0 0 1px; }
.maprow { display: flex; height: 587px; }
.canvas { width: 847px; height: 587px; background: #fff; }
.tip { font: 16px "Liberation Sans", sans-serif; letter-spacing: 0; }
.vs { width: 15px; display: flex; flex-direction: column; background: #f0f0f0; justify-content: space-between; }
.vs svg { width: 15px; height: 14px; }
.vs i { width: 14px; height: 17px; background: #cdcdcd; margin-bottom: 221px; }
.hs { height: 17px; display: flex; align-items: center; border-top: 1px solid #e3e3e3; }
.views { width: 100px; height: 16px; }
.hs i { width: 17px; height: 13px; background: #cdcdcd; margin-left: 354px; }
.ra { width: 8px; height: 10px; margin-left: 362px; }

.right { width: 270px; margin-left: 5px; flex: none; display: flex; flex-direction: column; height: 607px; }
.srch { padding-left: 5px; }
.srch .caret { margin: 0 3px 0 -1px; }
.sbox { width: 163px; height: 20px; margin-right: 2px; background: #fbfbfb; display: flex; align-items: center; justify-content: space-between; padding: 1px 0 0 4px; color: #6d6d6d; letter-spacing: -.2px; }
.srch .sbox .caret { margin: 0 1px; }
.note { height: 20px; flex: none; margin-right: 1px; background: #ffffe1; display: flex; align-items: center; justify-content: space-between; padding: 1px 6px 0 9px; letter-spacing: -.33px; }
.note svg { width: 9px; height: 9px; color: #000080; }
.list { height: 406px; flex: none; background: #fff; border: 1px solid #828790; margin-top: 1px; padding: 1px 11px 0 2px; }
h4 { margin: 0; height: 20px; font: inherit; line-height: 20px; color: #2a3c92; display: flex; align-items: center; padding-left: 11px; letter-spacing: -.48px; }
h4 i { flex: 1; height: 1px; background: #d7deed; margin-left: 4px; }
h4 .dark { background: #a6b6d8; }
p { margin: 1px 0 4px; height: 16px; line-height: 16px; width: 67px; display: flex; align-items: center; letter-spacing: -.85px; }
p span { letter-spacing: -.8px; }
p .dot { margin: 0 5px 0 8px; }
.sq { width: 15px; height: 15px; border: 3px solid #ff0; margin: 0 2px 0 3px; }
.cur { background: #d9d9d9; }
.split { height: 15px; flex: none; display: flex; align-items: center; padding-left: 90px; }
.split i { width: 90px; height: 1px; background: #a0a0a0; }
.split svg { width: 23px; height: 11px; margin-left: 66px; }
.cons { height: 99px; flex: none; border: solid #a0a0a0; border-width: 1px 0 0 1px; background: #fff; margin-right: 1px; }
.chead { height: 25px; background: #f0f0f0; display: flex; align-items: center; margin-bottom: 8px; letter-spacing: -.52px; padding-top: 2px; }
.chead svg { width: 15px; height: 16px; margin-right: 1px; margin-top: -5px; }
.tool { height: 20px; margin: 0 11px; border: 1px solid transparent; display: flex; align-items: center; padding: 1px 0 0 3px; }
.tool svg { width: 15px; height: 16px; margin-right: 7px; }
.second-tool { padding: 0 0 0 2px; }
.picked { background: #f0f0f0; border-color: #888 #bbb #bbb #888; }
.tabs { display: flex; height: 18px; margin-left: 2px; color: #666; }
.tabs div { display: flex; align-items: center; border: 1px solid #999; border-top: 0; border-radius: 0 0 4px 4px; height: 18px; padding-left: 4px; }
.tabs svg { width: 15px; height: 15px; margin-right: 4px; }
.tb1, .tb2 { width: 88px; }
.tabs .tb3 { width: 89px; background: #fff; color: #000; }
.cat { width: 19px; height: 71px; margin: 3px 0 0 1px; border: 1px solid #999; border-right: 0; border-radius: 4px 0 0 4px; padding: 3px 0 0 1px; color: #666; }
.cat svg { width: 16px; height: 16px; margin-bottom: 3px; }
.cat span { writing-mode: vertical-rl; line-height: 16px; letter-spacing: .2px; }
.status { height: 20px; flex: none; display: flex; align-items: center; padding-left: 961px; }
.status i { width: 128px; height: 18px; border: solid #e3e3e3; border-width: 1px 1px 1px 0; }
.status .n { width: 20px; margin-right: 4px; }
.status span { letter-spacing: -.68px; padding-top: 2px; }
.task { height: 42px; flex: none; background: #dfdfdf; display: flex; justify-content: space-between; }
.tray { height: 40px; display: flex; align-items: center; border-left: 1px solid #b5b5b5; margin-left: 4px; padding-left: 10px; }
.notif { width: 28px; height: 30px; margin-top: 1px; }
.num { font: 14px "DejaVu Sans", sans-serif; }
.clock { width: 38px; margin-left: 16px; display: flex; flex-direction: column; align-items: center; font: 10.5px/17px "DejaVu Sans", sans-serif; letter-spacing: -.5px; }
.time { display: flex; gap: 4px; margin-top: -2px; }
.eng { margin-left: 13px; width: 37px; letter-spacing: -.3px; }
.ti { width: 116px; height: 20px; }
.apps { display: flex; height: 40px; margin-right: -2px; }
.a { width: 49px; height: 40px; display: flex; align-items: center; justify-content: center; }
.act { background: #f4f4f4; width: 48px; }
.act, .run { border-bottom: 2px solid #e8056d; }
.run { width: 40px; margin: 0 4px 0 5px; }
.a svg { width: 24px; height: 24px; }
.epic { font: bold 8px "Liberation Sans Narrow", "Liberation Sans", sans-serif; fill: #fff; letter-spacing: -1px; }
.games { font: bold 4px "Liberation Sans", sans-serif; fill: #fff; letter-spacing: 0; }
```
